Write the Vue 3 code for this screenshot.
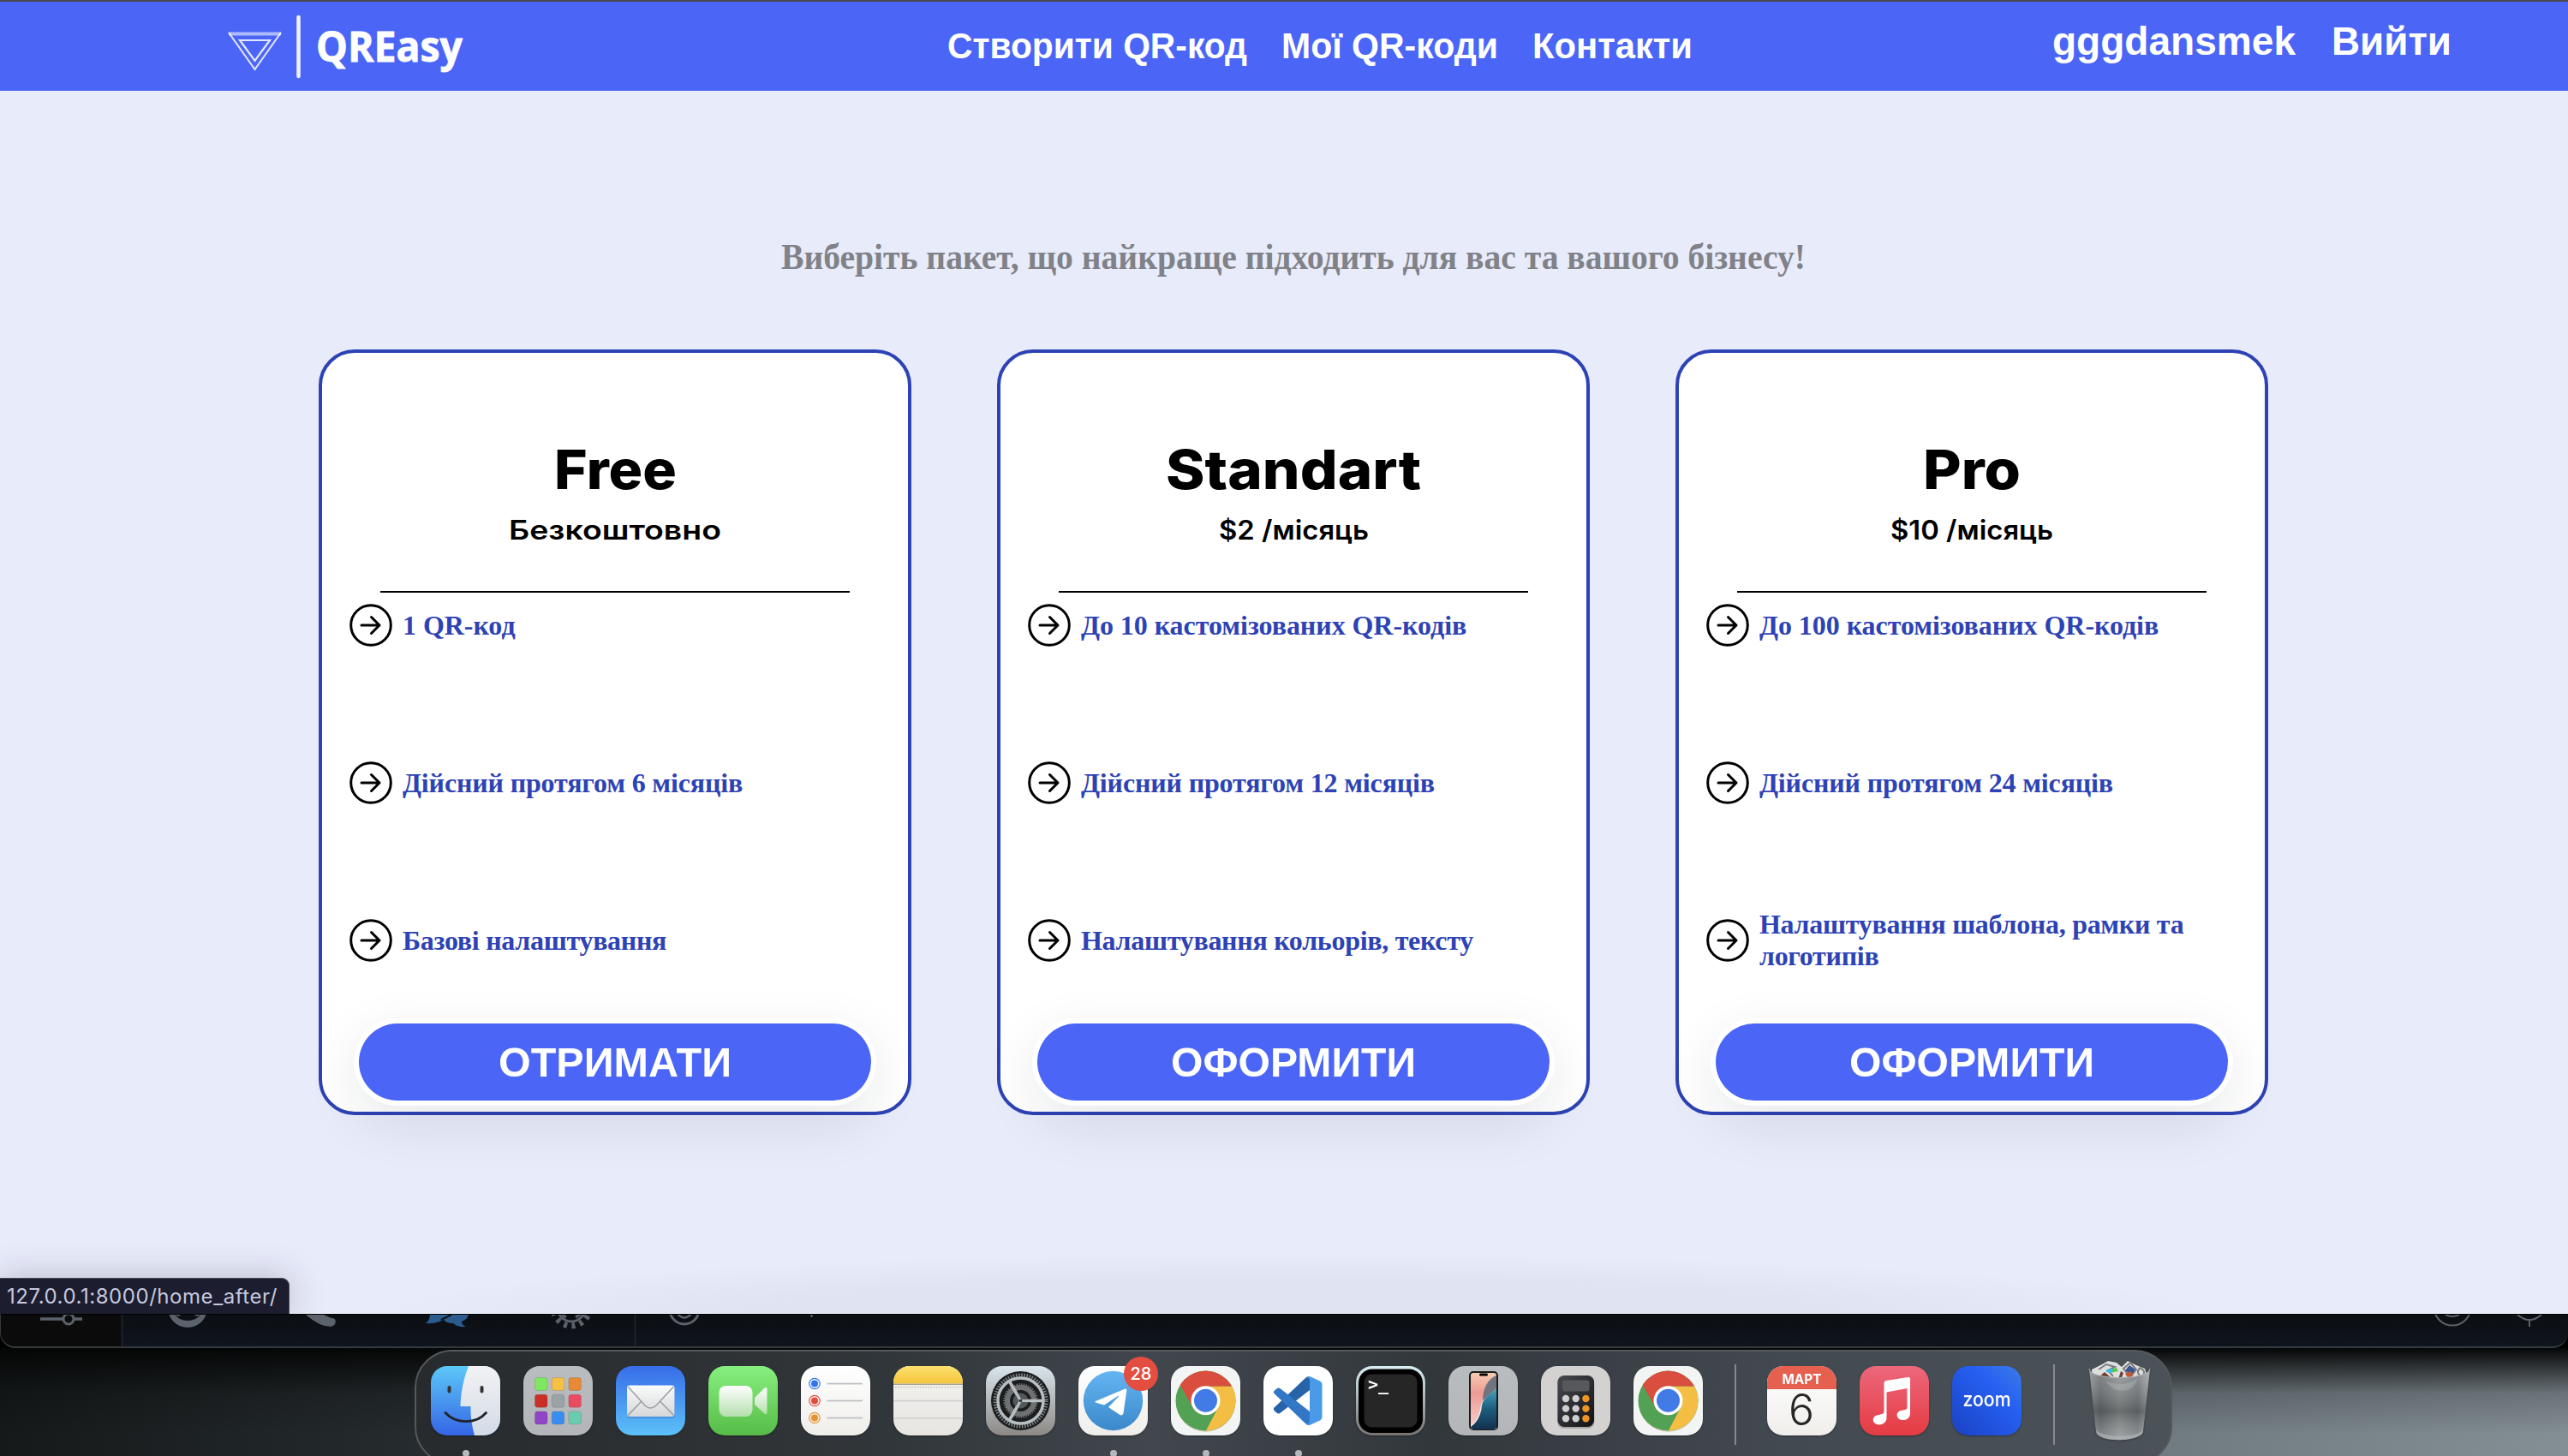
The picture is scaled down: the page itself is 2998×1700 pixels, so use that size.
<script setup>
const nav = [
  { label: 'Створити QR-код', width: 350 },
  { label: 'Мої QR-коди', width: 253 },
  { label: 'Контакти', width: 187 },
]

const plans = [
  {
    name: 'Free', nameWidth: 143, price: 'Безкоштовно', priceWidth: 248, action: 'ОТРИМАТИ', actionWidth: 272,
    features: ['1 QR-код', 'Дійсний протягом 6 місяців', 'Базові налаштування'],
  },
  {
    name: 'Standart', nameWidth: 298, price: '$2 /місяць', priceWidth: 175, action: 'ОФОРМИТИ', actionWidth: 286,
    features: ['До 10 кастомізованих QR-кодів', 'Дійсний протягом 12 місяців', 'Налаштування кольорів, тексту'],
  },
  {
    name: 'Pro', nameWidth: 114, price: '$10 /місяць', priceWidth: 190, action: 'ОФОРМИТИ', actionWidth: 286,
    features: ['До 100 кастомізованих QR-кодів', 'Дійсний протягом 24 місяців', 'Налаштування шаблона, рамки та логотипів'],
  },
]

const dock = [
  { id: 'finder', open: true }, { id: 'launchpad' }, { id: 'mail' }, { id: 'facetime' }, { id: 'reminders' },
  { id: 'notes' }, { id: 'settings' }, { id: 'telegram', open: true, badge: '28' }, { id: 'chrome', open: true },
  { id: 'vscode', open: true }, { id: 'terminal' }, { id: 'iphone' }, { id: 'calculator' }, { id: 'chrome' },
  { id: 'divider' }, { id: 'calendar' }, { id: 'music' }, { id: 'zoom' }, { id: 'divider' }, { id: 'trash' },
]

const pads = ['#7ee860', '#f5c043', '#e68a35', '#cb3026', '#9aa3a6', '#e94b60', '#9145c9', '#3a8df0', '#69cbb0']
const keys = [0, 1, 2, 3, 4, 5, 6, 7, 8]
const bullets = ['#2f74f0', '#e54b3c', '#e99330']
</script>

<template>
  <div class="screen">
    <section class="page">
      <header class="topbar">
        <svg class="logo" width="290" height="104" viewBox="0 0 290 104">
          <g fill="none" stroke="#fff">
            <path d="M2 37.500H63" stroke-width="4" opacity=".55" />
            <path d="M2 36L32.500 79L63 36" stroke-width="2" opacity=".85" />
            <path d="M15 45H50L32.500 69Z" stroke-width="2.200" opacity=".85" />
            <path d="M83.500 18V87" stroke-width="4.500" stroke-linecap="round" opacity=".92" />
          </g>
          <text x="104" y="70" class="logo-text" textLength="171" lengthAdjust="spacingAndGlyphs">QREasy</text>
        </svg>
        <nav class="nav">
          <svg v-for="n in nav" :key="n.label" :width="n.width" height="60" class="fit">
            <text x="0" y="46" :textLength="n.width" lengthAdjust="spacingAndGlyphs">{{ n.label }}</text>
          </svg>
        </nav>
        <div class="account">
          <svg width="284" height="60" class="fit"><text x="0" y="46" textLength="284" lengthAdjust="spacingAndGlyphs">gggdansmek</text></svg>
          <svg width="140" height="60" class="fit"><text x="0" y="46" textLength="140" lengthAdjust="spacingAndGlyphs">Вийти</text></svg>
        </div>
      </header>

      <main class="content">
        <h1 class="lead">
          <svg width="1196" height="60" class="fit"><text x="0" y="44" textLength="1196" lengthAdjust="spacingAndGlyphs">Виберіть пакет, що найкраще підходить для вас та вашого бізнесу!</text></svg>
        </h1>
        <div class="plans">
          <article v-for="p in plans" :key="p.name" class="card">
            <svg class="fit name" :width="p.nameWidth" height="64">
              <text x="0" y="50" :textLength="p.nameWidth" lengthAdjust="spacingAndGlyphs">{{ p.name }}</text>
            </svg>
            <svg class="fit price" :width="p.priceWidth" height="40">
              <text x="0" y="28" :textLength="p.priceWidth" lengthAdjust="spacingAndGlyphs">{{ p.price }}</text>
            </svg>
            <div class="rule"></div>
            <ul class="features">
              <li v-for="f in p.features" :key="f">
                <svg width="50" height="50" viewBox="0 0 50 50" fill="none" stroke="#000" stroke-width="3" stroke-linecap="round" stroke-linejoin="round">
                  <circle cx="25" cy="25" r="23.300" />
                  <path d="M14 25H35M25.500 15.500L35 25L25.500 34.500" />
                </svg>
                <span>{{ f }}</span>
              </li>
            </ul>
            <button class="cta">
              <svg class="fit" :width="p.actionWidth" height="60">
                <text x="0" y="47" :textLength="p.actionWidth" lengthAdjust="spacingAndGlyphs">{{ p.action }}</text>
              </svg>
            </button>
          </article>
        </div>
      </main>
      <div class="status">127.0.0.1:8000/home_after/</div>
    </section>

    <section class="strip">
      <svg width="2998" height="38" viewBox="0 1535 2998 38">
        <rect x="0" y="1535" width="141" height="38" fill="#0b0b0b" />
        <path d="M141.500 1535V1573M740.500 1535V1573" stroke="#1c2735" stroke-width="1.500" />
        <circle cx="218" cy="1527" r="23" fill="#5b626b" />
        <path d="M203 1535L207 1537Q218 1529 229 1537L233 1535Q228 1542 218 1542Q208 1542 203 1535Z" fill="#0d1117" />
        <g fill="none" stroke="#5b626b" stroke-width="3">
          <path d="M46 1540H72M86 1540H95" stroke-width="3.500" />
          <circle cx="79" cy="1540" r="6" />
          <circle cx="798" cy="1529" r="17" />
          <path d="M790 1534Q798 1543 806 1534" stroke-width="2.500" />
          <path d="M946.500 1535V1538" stroke-width="2" />
          <circle cx="2862" cy="1526" r="21.500" stroke-width="2" />
          <path d="M2854 1535Q2862 1539 2870 1535M2938 1535Q2952 1547 2966 1535M2952 1541V1549" stroke-width="2" />
        </g>
        <path d="M356 1535H377Q382 1538 390 1540Q393 1547 385 1549Q372 1549 356 1535Z" fill="#5b626b" />
        <path d="M501 1535H546Q544 1541 538 1543Q538 1547 543 1549Q533 1550 528 1545Q520 1545 517 1541Q507 1546 496 1545Q501 1541 501 1535Z" fill="#2c5c8d" />
        <path d="M514 1541L526 1535" stroke="#0d1117" stroke-width="2" />
        <g fill="none" stroke="#5b626b">
          <circle cx="666" cy="1527" r="16" stroke-width="3" />
          <circle cx="666" cy="1527" r="21" stroke-width="7" stroke-dasharray="4 5.420" />
          <path d="M655 1535L660 1538M671 1538L677 1534" stroke-width="3" />
        </g>
      </svg>
    </section>

    <section class="desktop">
      <svg width="0" height="0" class="defs">
        <defs>
          <linearGradient id="gFinder" x2="0" y2="1"><stop stop-color="#5dc8f8" /><stop offset="1" stop-color="#3565e6" /></linearGradient>
          <linearGradient id="gFace" x2="0" y2="1"><stop stop-color="#f2f2f4" /><stop offset="1" stop-color="#d3dbe6" /></linearGradient>
          <linearGradient id="gMail" x2="0" y2="1"><stop stop-color="#376de9" /><stop offset="1" stop-color="#5cc1f8" /></linearGradient>
          <linearGradient id="gGreen" x2="0" y2="1"><stop stop-color="#87ef7f" /><stop offset="1" stop-color="#57bc47" /></linearGradient>
          <linearGradient id="gCam" x2="0" y2="1"><stop stop-color="#fff" /><stop offset="1" stop-color="#b5dfae" /></linearGradient>
          <linearGradient id="gPaper" x2="0" y2="1"><stop stop-color="#fff" /><stop offset="1" stop-color="#efeeeb" /></linearGradient>
          <linearGradient id="gEnv" x2="0" y2="1"><stop stop-color="#fbfbfb" /><stop offset="1" stop-color="#d5d7d9" /></linearGradient>
          <linearGradient id="gNote" x2="0" y2="1"><stop stop-color="#fbe06d" /><stop offset="1" stop-color="#f5c63a" /></linearGradient>
          <linearGradient id="gSet" x2="0" y2="1"><stop stop-color="#d9e5ec" /><stop offset="1" stop-color="#8d8985" /></linearGradient>
          <linearGradient id="gTg" x2="0" y2="1"><stop stop-color="#64b5f3" /><stop offset="1" stop-color="#3b88ca" /></linearGradient>
          <linearGradient id="gTerm" x2="0" y2="1"><stop stop-color="#d8eef5" /><stop offset="1" stop-color="#77726f" /></linearGradient>
          <linearGradient id="gGray" x2="0" y2="1"><stop stop-color="#b9bdc0" /><stop offset="1" stop-color="#b4b5b8" /></linearGradient>
          <linearGradient id="gPeach" x2="0" y2="1"><stop stop-color="#f7cdb0" /><stop offset=".35" stop-color="#ef9a95" /><stop offset="1" stop-color="#f5d2cf" /></linearGradient>
          <linearGradient id="gSea" x2="0" y2="1"><stop stop-color="#42a7bf" /><stop offset=".5" stop-color="#1f5c7d" /><stop offset="1" stop-color="#12304e" /></linearGradient>
          <linearGradient id="gCalc" x2="1" y2="1"><stop stop-color="#474a50" /><stop offset="1" stop-color="#121214" /></linearGradient>
          <linearGradient id="gMusic" x2="0" y2="1"><stop stop-color="#ec687b" /><stop offset="1" stop-color="#e53b43" /></linearGradient>
          <linearGradient id="gZoom" x1="1" x2="0" y2="1"><stop stop-color="#3c7ce6" /><stop offset=".35" stop-color="#2660f2" /><stop offset="1" stop-color="#1a42c4" /></linearGradient>
          <linearGradient id="gTrash" x2="1" y2="0"><stop stop-color="#8b8f92" /><stop offset=".18" stop-color="#696d70" /><stop offset=".5" stop-color="#8c9092" /><stop offset=".8" stop-color="#74787b" /><stop offset="1" stop-color="#a3a8aa" /></linearGradient>
          <linearGradient id="gTrashShade" x2="0" y2="1"><stop stop-color="#fff" stop-opacity=".18" /><stop offset=".6" stop-color="#222" stop-opacity=".3" /><stop offset="1" stop-color="#fff" stop-opacity=".2" /></linearGradient>
          <clipPath id="tile"><rect width="81" height="81" rx="19" /></clipPath>
          <clipPath id="wheel"><circle cx="40.500" cy="40.500" r="35" /></clipPath>
          <clipPath id="phone"><rect x="26" y="8" width="30" height="66" rx="3" /></clipPath>
        </defs>
      </svg>

      <div class="dock">
        <template v-for="(d, i) in dock" :key="i">
          <div v-if="d.id === 'divider'" class="divider"></div>
          <div v-else class="app">
            <svg width="81" height="81" viewBox="0 0 81 81" class="icon">
              <g v-if="d.id === 'finder'" clip-path="url(#tile)">
                <rect width="81" height="81" fill="url(#gFinder)" />
                <path d="M44 0C38 15 35 31 34.500 47H46.500C46 59 48 70 51 81H81V0Z" fill="url(#gFace)" />
                <path d="M21.500 25V29.500M59.500 25V29.500" stroke="#333" stroke-width="4" stroke-linecap="round" />
                <path d="M17 54.500C29 68 53 68 64.500 54.500" fill="none" stroke="#20242c" stroke-width="2.800" stroke-linecap="round" />
              </g>
              <g v-else-if="d.id === 'launchpad'">
                <rect width="81" height="81" rx="19" fill="url(#gGray)" />
                <rect v-for="(c, k) in pads" :key="k" :x="13.500 + (k % 3) * 19.700" :y="13.500 + Math.floor(k / 3) * 19.700" width="14.500" height="15" rx="3" :fill="c" stroke="#000" stroke-opacity=".12" />
              </g>
              <g v-else-if="d.id === 'mail'">
                <rect width="81" height="81" rx="19" fill="url(#gMail)" />
                <rect x="13" y="25" width="56" height="36" rx="3" fill="#2060b0" opacity=".3" />
                <rect x="13" y="22.500" width="55.500" height="36.500" rx="3" fill="url(#gEnv)" />
                <path d="M14 57.500L30 41M67.500 57.500L51.500 41M14 24L34 46Q40.500 52 47 46L67.500 24" fill="none" stroke="#9a9da1" stroke-width="1.500" />
              </g>
              <g v-else-if="d.id === 'facetime'">
                <rect width="81" height="81" rx="19" fill="url(#gGreen)" />
                <rect x="12.500" y="23" width="39" height="36" rx="8" fill="url(#gCam)" />
                <path d="M54 37L65 26Q68 23.500 68.500 27V54Q68 58 65 55L54 45Z" fill="url(#gCam)" />
              </g>
              <g v-else-if="d.id === 'reminders'">
                <rect width="81" height="81" rx="19" fill="url(#gPaper)" />
                <g v-for="(c, k) in bullets" :key="k">
                  <circle cx="16" :cy="20.500 + k * 20" r="4" :fill="c" />
                  <circle cx="16" :cy="20.500 + k * 20" r="6.200" fill="none" :stroke="c" stroke-width="1.200" />
                  <rect x="30.500" :y="19.700 + k * 20" width="41.500" height="1.700" fill="#bebec2" />
                </g>
              </g>
              <g v-else-if="d.id === 'notes'" clip-path="url(#tile)">
                <rect width="81" height="81" fill="url(#gPaper)" />
                <rect y="22" width="81" height="59" fill="#c8c5bb" opacity=".2" />
                <rect width="81" height="20.500" fill="url(#gNote)" />
                <path d="M0 21.200H81" stroke="#aba58e" stroke-width="1.500" />
                <path d="M2 24.500H81" stroke="#c4c2bc" stroke-width="1.600" stroke-dasharray="1.600 1.600" />
                <path d="M0 40.500H81M0 61H81" stroke="#cfcfd0" stroke-width="1.600" />
              </g>
              <g v-else-if="d.id === 'settings'">
                <rect width="81" height="81" rx="19" fill="url(#gSet)" />
                <circle cx="40.500" cy="40.500" r="34.500" fill="#1c1d1f" />
                <g fill="none" stroke="#b7bfc3">
                  <circle cx="40.500" cy="40.500" r="29.500" stroke-width="5" stroke-dasharray="1.500 1.600" stroke="#7e8588" />
                  <circle cx="40.500" cy="40.500" r="26.500" stroke-width="3.400" />
                  <circle cx="40.500" cy="40.500" r="15.500" stroke="#6e7071" stroke-width="6" />
                  <circle cx="40.500" cy="40.500" r="19" stroke="#777" stroke-width="2.500" stroke-dasharray="1.300 1.500" />
                  <path d="M40.500 40.500H66M40.500 40.500L27.500 18M40.500 40.500L27.500 63" stroke-width="3.600" />
                </g>
                <circle cx="40.500" cy="40.500" r="9" fill="#55585a" />
                <path d="M40.500 40.500H52M40.500 40.500L34 29M40.500 40.500L34 52" stroke="#b7bfc3" stroke-width="3.200" />
                <circle cx="40.500" cy="40.500" r="1.800" fill="#333" />
              </g>
              <g v-else-if="d.id === 'telegram'">
                <rect width="81" height="81" rx="19" fill="url(#gPaper)" />
                <circle cx="40.500" cy="40.500" r="34.700" fill="url(#gTg)" />
                <path d="M20 41L54.500 26.500Q56.500 26 56.300 28.500L52.500 55Q51.500 58.500 48.500 57L35 48L47 35.500Q48 34 46 35L30 45.500L20 42.500Q18.500 41.800 20 41Z" fill="#fff" />
              </g>
              <g v-else-if="d.id === 'chrome'">
                <rect width="81" height="81" rx="19" fill="#f3f4f4" />
                <circle cx="40.500" cy="42" r="34.700" fill="#7b6a30" opacity=".3" />
                <g clip-path="url(#wheel)">
                  <rect width="81" height="81" fill="#53a154" />
                  <path d="M40.500 23.500H81V81H38L55 48Z" fill="#f3be43" />
                  <path d="M0 0H81V23.500H40.500L26 49L11.500 23.500Z" fill="#d94e3e" />
                  <path d="M40.500 75L55.500 48H40.500Z" fill="#53a154" />
                </g>
                <circle cx="40.500" cy="40.300" r="17" fill="#fff" />
                <circle cx="40.500" cy="40.300" r="13.500" fill="#427ae6" />
              </g>
              <g v-else-if="d.id === 'vscode'">
                <rect width="81" height="81" rx="19" fill="#fff" />
                <path d="M12 49Q11.500 51 13 52.500L16 55Q18 56 20 54.500L54 28V12Q51 12 49.500 13.500Z" fill="#2763a9" />
                <path d="M12 31.500Q11.500 29.500 13 28.500L16 26Q18 25 20 26.500L54 53V69Q51 69 49.500 67.500Z" fill="#3277c6" />
                <path d="M54 12L66 17.500Q68.500 19 68.500 21V60Q68.500 62 66 63.500L54 69Q52 69.500 50.500 68Q54 67.500 54 64V17Q54 13.500 50.500 13Q52 11.500 54 12Z" fill="#4a9aea" />
              </g>
              <g v-else-if="d.id === 'terminal'">
                <rect width="81" height="81" rx="19" fill="url(#gTerm)" />
                <rect x="3" y="3.500" width="75" height="74.500" rx="16" fill="#000" />
                <rect x="9.500" y="9.500" width="62" height="62" rx="9" fill="#262627" />
                <text x="14" y="27.500" class="prompt">&gt;_</text>
              </g>
              <g v-else-if="d.id === 'iphone'">
                <rect width="81" height="81" rx="19" fill="url(#gGray)" />
                <rect x="24" y="6" width="34" height="69" rx="5" fill="#1b1b1d" />
                <g clip-path="url(#phone)">
                  <rect x="26" y="8" width="30" height="66" fill="url(#gPeach)" />
                  <path d="M56 11C46 15 40 26 40 40L56 28Z" fill="#71747f" />
                  <path d="M56 26C52 31 39 39 38 45C36 58 32 66 26 69V74H56Z" fill="#f4ecea" />
                  <path d="M56 26C52 31 40 37 39 46C38 59 32 67 26 71V74H56Z" fill="url(#gSea)" />
                </g>
                <rect x="36" y="8.500" width="10" height="3" rx="1.500" fill="#000" />
              </g>
              <g v-else-if="d.id === 'calculator'">
                <rect width="81" height="81" rx="19" fill="#d3d2d0" />
                <rect x="19" y="12" width="43.500" height="61" rx="8" fill="#000" opacity=".2" />
                <rect x="19.500" y="11" width="42.500" height="60" rx="7.500" fill="url(#gCalc)" />
                <rect x="25" y="16.500" width="31.500" height="13" rx="3" fill="#57585c" />
                <circle v-for="k in keys" :key="k" :cx="29 + (k % 3) * 11.700" :cy="38 + Math.floor(k / 3) * 11.600" r="4.200" :fill="k % 3 === 2 ? '#ef9425' : '#cfcfcf'" />
              </g>
              <g v-else-if="d.id === 'calendar'" clip-path="url(#tile)">
                <rect width="81" height="81" fill="url(#gPaper)" />
                <rect width="81" height="27" fill="#e5604f" />
                <text x="40.500" y="20.500" text-anchor="middle" class="month" textLength="46" lengthAdjust="spacingAndGlyphs">МАРТ</text>
                <text x="40" y="69" text-anchor="middle" class="day">6</text>
              </g>
              <g v-else-if="d.id === 'music'">
                <rect width="81" height="81" rx="19" fill="url(#gMusic)" />
                <path d="M28.500 20Q28.500 17.500 31 17L56.500 13Q59 12.600 59 15V55C59 63 51 64 47.500 62.500C42 60 42.500 53.500 48 52C52 51 55.500 51.500 55.500 48V26L31.500 30.500V60C31.500 68.500 22.500 69.500 19 67.500C14 65 15 59 20 57.500C25 56 28.500 56.500 28.500 53Z" fill="#fff" />
              </g>
              <g v-else-if="d.id === 'zoom'">
                <rect width="81" height="81" rx="19" fill="url(#gZoom)" />
                <text x="12.500" y="46.500" class="zoom" textLength="56" lengthAdjust="spacingAndGlyphs">zoom</text>
              </g>
              <g v-else-if="d.id === 'trash'">
                <path d="M8 4L20 -2L27 -6L37 -4L43 1L50 -6L60 -1L70 3L73 14L60 21H20L9 14Z" fill="#dfdfdd" />
                <path d="M16 4L25 -2L35 1L27 5L33 12M45 3L53 -4L60 4L53 13ZM64 2Q73 6 66 13Q59 8 64 2" fill="none" stroke="#7c7f80" stroke-width="2" />
                <path d="M27 4L37 2L39 6L29 8Z" fill="#55c94f" />
                <path d="M25 4L33 3L31 8L25 7Z" fill="#38b9e8" />
                <path d="M47 5L52 -1L59 4L54 11Z" fill="#3c548f" />
                <path d="M47 9L53 6L57 10L51 15Z" fill="#b95a34" />
                <path d="M16 13L23 7L31 14ZM39 15L42 6L45 8L42 16Z" fill="#6d3f30" />
                <path d="M5 3C5 17 76 17 76 3L68 76C66 89 16 90 13 77Z" fill="url(#gTrash)" />
                <path d="M5 3C5 17 76 17 76 3L68 76C66 89 16 90 13 77Z" fill="url(#gTrashShade)" />
                <path d="M5 3C5 17 76 17 76 3" fill="none" stroke="#aeb2b4" stroke-width="1" />
                <path d="M13 75C22 84 59 84 68 75L67 79C60 88 21 89 14 79Z" fill="#b5babc" opacity=".55" />
                <path d="M24 18Q46 26 62 14Q55 34 34 27Z" fill="#c5c9ca" opacity=".3" />
              </g>
            </svg>
            <span v-if="d.badge" class="badge">{{ d.badge }}</span>
            <i v-if="d.open" class="dot"></i>
          </div>
        </template>
      </div>
    </section>
  </div>
</template>

<style>
html, body { margin: 0; overflow: hidden; background: #000; }
</style>

<style scoped>
.screen { width: 2998px; height: 1700px; overflow: hidden; display: flex; flex-direction: column; background: #000; font-family: "Liberation Sans", Arial, sans-serif; }
.fit { display: block; overflow: visible; flex: none; }
.page { position: relative; height: 1534px; flex: none; box-sizing: border-box; background: radial-gradient(1080px 70px at 1510px 100%, rgba(20, 20, 40, .035) 60%, transparent) #e8ebfa; border-top: 2px solid #4a4a4c; border-bottom: 1px solid #f3f4fc; }
.topbar { display: flex; height: 104px; background: #4b66f7; color: #fff; font-weight: 700; }
.topbar text { fill: #fff; }
.logo { margin-left: 265px; flex: none; }
.logo-text { font-family: "Open Sans", "Noto Sans", sans-serif; font-size: 48px; font-weight: 700; stroke: #fff; stroke-width: .8px; }
.nav { display: flex; gap: 40px; margin-left: 551px; padding-top: 20px; font-size: 41.6px; }
.account { display: flex; gap: 42px; margin-left: 420px; padding-top: 16px; font-size: 47px; }
.content { display: flex; flex-direction: column; padding-left: 372px; width: 2276px; }
.lead { margin: 164px 0 78px; display: flex; justify-content: center; font: 700 41.6px "Liberation Serif", "Times New Roman", serif; }
.lead text { fill: #808288; }
.plans { display: flex; gap: 100px; }
.card { box-sizing: border-box; width: 692px; height: 894px; border: 4px solid #2d43b5; border-radius: 42px; background: #fff; display: flex; flex-direction: column; align-items: center; padding-top: 109px; }
.name { font: 800 63px Inter, sans-serif; }
.price { margin-top: 17px; font: 600 31px Inter, sans-serif; }
.rule { width: 548px; height: 2px; background: #000; margin-top: 48px; flex: none; }
.features { list-style: none; margin: 13px 0 0; padding: 0 32px; width: 620px; display: flex; flex-direction: column; gap: 134px; font: 700 32px/37px "Liberation Serif", "Times New Roman", serif; color: #2d43b5; }
.features li { display: flex; align-items: center; gap: 12px; height: 50px; letter-spacing: -.05px; }
.features li:nth-child(2) { letter-spacing: -.15px; }
.features li:nth-child(3) { letter-spacing: -.29px; }
.features svg { flex: none; }
.cta { margin-top: 72px; width: 598px; height: 90px; flex: none; border: 0; padding: 0; border-radius: 45px; background: #4b66f7; display: flex; align-items: center; justify-content: center; box-shadow: 0 0 0 6px #fff, 0 20px 64px 4px rgba(20, 25, 30, .1); font: 700 48px "Liberation Sans", Arial, sans-serif; }
.cta text { fill: #fff; }
.status { position: absolute; left: 0; bottom: -1px; box-sizing: border-box; width: 338px; height: 42px; padding-left: 8px; line-height: 41px; background: #1c1d2e; color: #c5c8df; border-top: 1px solid #4a4b57; border-right: 1px solid #4a4b57; border-top-right-radius: 9px; box-shadow: 0 0 40px rgba(30, 30, 50, .25); font-family: Inter, sans-serif; font-size: 24px; letter-spacing: .55px; white-space: nowrap; }
.strip { position: relative; z-index: 1; height: 40px; flex: none; box-sizing: border-box; border-top: 1px solid #000; border-bottom: 2px solid #36393c; border-left: 1px solid #36393c; border-radius: 0 0 18px 18px; background: linear-gradient(#0b0e12, #10151d); overflow: hidden; }
.strip svg { display: block; }
.desktop { flex: 1; min-height: 0; display: flex; padding: 2px 0 0 484px; background: linear-gradient(#050606 0, rgba(5, 6, 6, .72) 14%, rgba(5, 6, 6, .2) 42%, transparent 80%), linear-gradient(90deg, #15191a 0, #262c2f 17%, #3c4347 55%, #707b80 84%, #848e95 100%); }
.defs { position: absolute; }
.dock { box-sizing: border-box; width: 2052px; height: 134px; flex: none; border: 2px solid #55595c; border-radius: 44px; padding: 17px 0 0 17px; display: flex; align-items: flex-start; gap: 27px; background: linear-gradient(90deg, #282b2d 0, #31363a 27%, #42474e 42%, #32373c 58%, #434950 78%, #4b5359 100%); }
.app { position: relative; width: 81px; height: 81px; flex: none; }
.icon { display: block; overflow: visible; filter: drop-shadow(0 1px 1px rgba(0, 0, 0, .3)); }
.divider { width: 2px; height: 94px; margin: -2px 8.500px 0 10px; background: #858a90; flex: none; }
.badge { position: absolute; left: 53px; top: -11px; width: 40px; height: 40px; border-radius: 50%; background: #e34e40; color: #fff; font: 500 20px/40px Inter, sans-serif; text-align: center; }
.dot { position: absolute; left: 36.500px; top: 98px; width: 8px; height: 8px; border-radius: 4px; background: #b4b8bd; }
.prompt { font: 700 20px "DejaVu Sans Mono", monospace; fill: #fff; }
.month { font: 700 16.500px Inter, sans-serif; fill: #fff; }
.day { font: 300 50px Inter, sans-serif; fill: #262626; }
.zoom { font: 500 23px Inter, sans-serif; fill: #fff; }
</style>
